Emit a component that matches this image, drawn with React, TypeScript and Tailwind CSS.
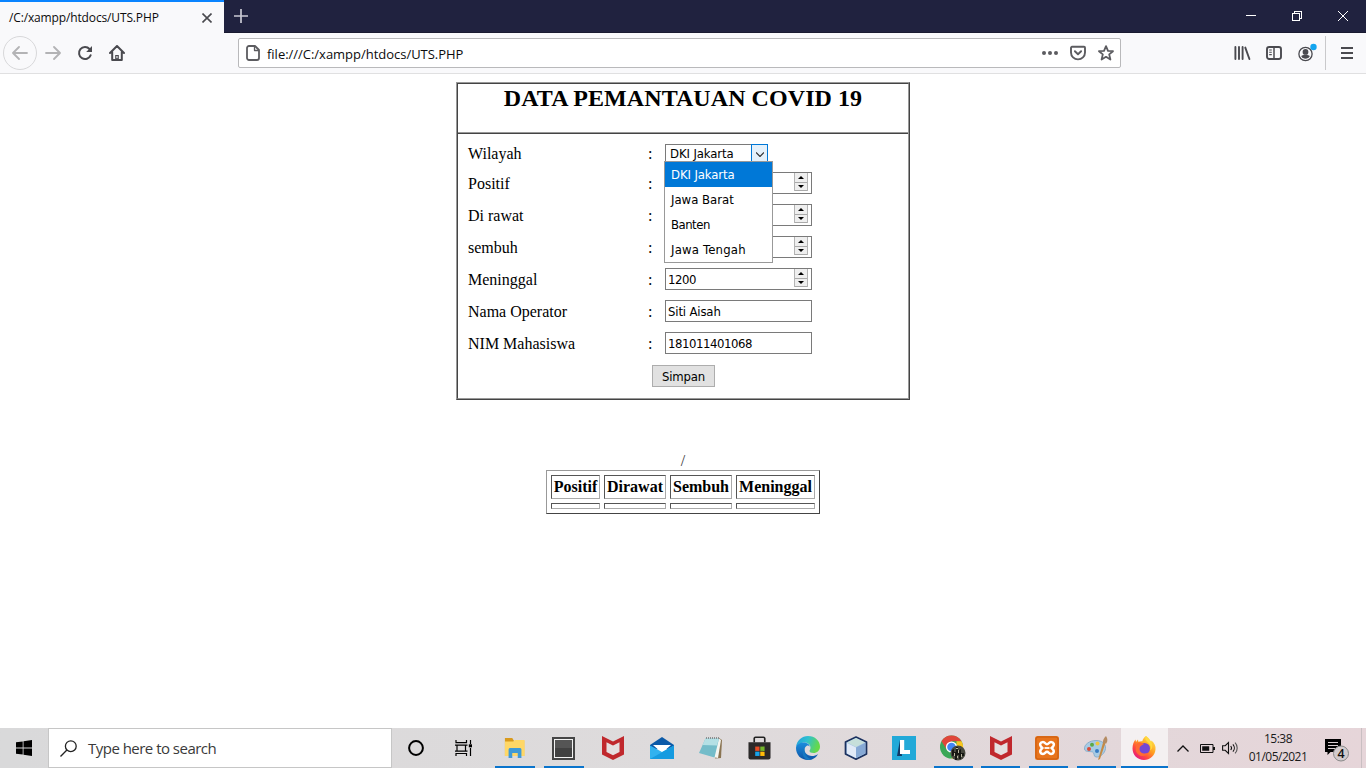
import type { ReactNode } from 'react';

const segoe = "font-['Open_Sans',sans-serif]";
const tahoma = "font-['DejaVu_Sans_Condensed','DejaVu_Sans',sans-serif] [font-stretch:condensed]";

/* ---------- Browser chrome ---------- */

function TitleBar() {
  return (
    <div className="flex h-[33px] bg-[#20223f] border-b border-[#191a30]">
      <div className={`flex h-[33px] w-[224px] items-center justify-between border-t-2 border-[#0a84ff] bg-[#f9f9fb] pl-[9px] pr-3 ${segoe}`}>
        <span className="text-[12px] leading-4 tracking-[-0.14px] text-[#0c0c0d]">/C:/xampp/htdocs/UTS.PHP</span>
        <svg width="10" height="10" viewBox="0 0 10 10" stroke="#4a4a4f" strokeWidth="1.6">
          <path d="M0.5 0.5l9 9M9.5 0.5l-9 9" />
        </svg>
      </div>
      <div className="flex w-[34px] items-center justify-center">
        <svg width="14" height="14" viewBox="0 0 14 14" stroke="#c9c9d3" strokeWidth="1.7">
          <path d="M7 0v14M0 7h14" />
        </svg>
      </div>
      <div className="flex-1" />
      <div className="flex w-[138px] text-white">
        <div className="flex w-[46px] items-center justify-center">
          <svg width="10" height="10" viewBox="0 0 10 10"><path d="M0 4h10v1H0z" fill="#fff" /></svg>
        </div>
        <div className="flex w-[46px] items-center justify-center">
          <svg width="10" height="10" viewBox="0 0 10 10" fill="none" stroke="#fff" shapeRendering="crispEdges">
            <path d="M.5 2.5h7v7h-7zM2.5 2.5v-2h7v7h-2" />
          </svg>
        </div>
        <div className="flex w-[46px] items-center justify-center">
          <svg width="10" height="10" viewBox="0 0 10 10" stroke="#fff"><path d="M0 0l10 10M10 0L0 10" /></svg>
        </div>
      </div>
    </div>
  );
}

function NavBar() {
  return (
    <div className="flex h-[41px] items-center border-b border-[#e0e0e1] bg-[#f9f9fb]">
      <div className="ml-[3px] flex size-[34px] items-center justify-center rounded-full border border-[#d8d8da]">
        <svg width="16" height="14" viewBox="0 0 16 14" fill="none" stroke="#b3b3b5" strokeWidth="1.8" strokeLinecap="round" strokeLinejoin="round">
          <path d="M15 7H1.5M7 1L1 7l6 6" />
        </svg>
      </div>
      <svg className="ml-2" width="16" height="14" viewBox="0 0 16 14" fill="none" stroke="#b3b3b5" strokeWidth="1.8" strokeLinecap="round" strokeLinejoin="round">
        <path d="M1 7h13.5M9 1l6 6-6 6" />
      </svg>
      <svg className="ml-4" width="16" height="16" viewBox="0 0 16 16" fill="none" stroke="#4a4a4f" strokeWidth="2">
        <path d="M13.6 10.3A6 6 0 1 1 12.5 4" strokeLinecap="round" />
        <path d="M15 1v6H9.2z" fill="#4a4a4f" stroke="none" />
      </svg>
      <svg className="ml-4" width="16" height="16" viewBox="0 0 16 16" fill="none" stroke="#4a4a4f" strokeWidth="2" strokeLinejoin="round" strokeLinecap="round">
        <path d="M1 8l7-7 7 7M3.2 7v8h9.6V7" />
        <path d="M6.2 15v-5h3.6v5z" fill="#4a4a4f" stroke="none" />
        <path d="M8 11.5v1.2" stroke="#f9f9fb" strokeWidth="1.2" />
      </svg>
      <div className="ml-[113px] flex h-[30px] w-[883px] items-center rounded-[2px] border border-[#b9b9bb] bg-white pl-[7px] pr-[6px]">
        <svg width="14" height="16" viewBox="0 0 14 16" fill="none" stroke="#5c5c60" strokeWidth="1.8" strokeLinejoin="round">
          <path d="M3 1h6l4 4v8a2 2 0 0 1-2 2H3a2 2 0 0 1-2-2V3a2 2 0 0 1 2-2z" />
          <path d="M8.5 1v4.5H13" strokeWidth="1.3" />
        </svg>
        <span className={`ml-[7px] flex-1 pt-[2px] text-[13px] leading-4 tracking-[-0.02px] text-[#0c0c0d] ${segoe}`}>file:///C:/xampp/htdocs/UTS.PHP</span>
        <svg width="16" height="4" viewBox="0 0 16 4" fill="#5c5c60"><circle cx="2" cy="2" r="2" /><circle cx="8" cy="2" r="2" /><circle cx="14" cy="2" r="2" /></svg>
        <svg className="ml-3" width="16" height="16" viewBox="0 0 16 16" fill="none" stroke="#5c5c60" strokeWidth="1.9" strokeLinecap="round" strokeLinejoin="round">
          <path d="M2 1.8h12a1 1 0 0 1 1 1V7.4a7 7 0 0 1-14 0V2.8a1 1 0 0 1 1-1z" />
          <path d="M4.9 6.2L8 9.2l3.1-3" />
        </svg>
        <svg className="ml-3" width="16" height="16" viewBox="0 0 16 16" fill="none" stroke="#5c5c60" strokeWidth="1.8" strokeLinejoin="round">
          <path d="M8 1.2l2 4.6 5 .4-3.8 3.2 1.2 5.1L8 11.8l-4.4 2.7 1.2-5.1L1 6.2l5-.4z" />
        </svg>
      </div>
      <svg className="ml-[113px]" width="17" height="16" viewBox="0 0 17 16" fill="none" stroke="#4a4a4f" strokeWidth="1.9" strokeLinecap="round">
        <path d="M1.4 2v12M5 2v12M8.6 2v12M11.3 2.6L15.4 14" />
      </svg>
      <svg className="ml-[15px]" width="16" height="16" viewBox="0 0 16 16" fill="none" stroke="#4a4a4f" strokeWidth="1.9">
        <rect x="1" y="2" width="14" height="12" rx="2.2" />
        <path d="M8 2v12" strokeWidth="1.5" />
        <path d="M3.2 5h2.6M3.2 7.3h2.6M3.2 9.6h2.6" strokeWidth="1.1" />
      </svg>
      <svg className="ml-[15px] -mt-px" width="21" height="20" viewBox="0 0 21 20">
        <circle cx="8.5" cy="11" r="6.6" fill="none" stroke="#4a4a4f" strokeWidth="1.3" />
        <circle cx="8.5" cy="8.9" r="2.9" fill="#4a4a4f" />
        <path d="M4.2 13.3c1.2-2 7.4-2 8.6 0a5 5 0 0 1-8.6 0z" fill="#4a4a4f" />
        <circle cx="16.500" cy="4" r="3.2" fill="#13a5ef" />
      </svg>
      <div className="ml-[7px] h-[34px] w-px bg-[#c9c9cb]" />
      <svg className="ml-[15px]" width="12" height="12" viewBox="0 0 12 12" stroke="#4a4a4f" strokeWidth="1.8"><path d="M0 1h12M0 6h12M0 11h12" /></svg>
    </div>
  );
}

/* ---------- Page content ---------- */

function Spinner() {
  return (
    <div className="-mt-[2px] flex h-[18px] w-[14px] flex-col border-x border-[#b4b4b4] bg-[#efefef]">
      <div className="flex h-[9px] items-center justify-center">
        <svg width="6" height="3" viewBox="0 0 6 3"><path d="M3 0L6 3H0z" /></svg>
      </div>
      <div className="flex h-[9px] items-center justify-center border-y border-[#aaa]">
        <svg width="6" height="3" viewBox="0 0 6 3"><path d="M3 3L6 0H0z" /></svg>
      </div>
    </div>
  );
}

function Field({ value, spin }: { value: string; spin?: boolean }) {
  return (
    <div className={`flex h-[22px] w-[147px] items-center justify-between border border-[#7a7a7a] bg-white pl-[2px] pr-[3px] text-[13px] leading-4 ${tahoma}`}>
      <span className={`pt-[2px] ${/^\d/.test(value) ? 'tracking-[-0.45px]' : 'tracking-[-0.15px]'}`}>{value}</span>
      {spin && <Spinner />}
    </div>
  );
}

const regions: [string, string][] = [
  ['DKI Jakarta', 'tracking-[-0.1px]'],
  ['Jawa Barat', 'tracking-[0px]'],
  ['Banten', 'tracking-[-0.5px]'],
  ['Jawa Tengah', 'tracking-[0.2px]'],
];

function RegionSelect() {
  return (
    <div className={`relative mt-[2px] flex h-[20px] w-[103px] border border-[#7a7a7a] bg-white text-[13px] leading-4 ${tahoma}`}>
      <span className="flex-1 pl-1 pt-[1px] tracking-[-0.1px]">DKI Jakarta</span>
      <div className="-m-px flex w-[17px] items-center justify-center border border-[#0078d7] bg-[#e5f1fb]">
        <svg width="8" height="5" viewBox="0 0 8 5" fill="none" stroke="#333" strokeWidth="1.2"><path d="M0 .5l4 4 4-4" /></svg>
      </div>
      <div className="absolute -left-[2px] top-[16px] z-10 w-[109px] border border-[#999] bg-white">
        {regions.map(([name, spacing], i) => (
          <div key={name} className={`flex h-[25px] items-center pl-[6px] ${spacing} ${i === 0 ? 'bg-[#0078d7] text-white' : ''}`}>{name}</div>
        ))}
      </div>
    </div>
  );
}

const rows: [string, ReactNode][] = [
  ['Positif', <Field value="" spin />],
  ['Di rawat', <Field value="" spin />],
  ['sembuh', <Field value="" spin />],
  ['Meninggal', <Field value="1200" spin />],
  ['Nama Operator', <Field value="Siti Aisah" />],
  ['NIM Mahasiswa', <Field value="181011401068" />],
];

function Row({ label, short, children }: { label: string; short?: boolean; children: ReactNode }) {
  return (
    <div className={`flex items-center ${short ? 'h-[28px]' : 'h-8'}`}>
      <span className="w-[180px] pt-px">{label}</span>
      <span className="w-[17px] pt-px">:</span>
      {children}
    </div>
  );
}

function FormTable() {
  return (
    <div className="h-[318px] w-[454px] border border-b-[#444] border-l-[#999] border-r-[#444] border-t-[#999]">
      <div className="h-[316px] border border-b-[#999] border-l-[#444] border-r-[#999] border-t-[#444]">
        <h1 className="h-[48px] pt-[1px] text-center text-[24px] font-bold leading-[27px] tracking-[0.07px]">DATA PEMANTAUAN COVID 19</h1>
        <div className="h-[2px] border-b border-t border-b-[#444] border-t-[#999]" />
        <div className="pl-[10px] pt-[5px]">
          <Row label="Wilayah" short><RegionSelect /></Row>
          {rows.map(([label, field]) => <Row key={label} label={label}>{field}</Row>)}
          <button className={`ml-[184px] mt-[6px] block h-[22px] w-[63px] border border-[#adadad] bg-[#e1e1e1] pt-px text-[13px] leading-[20px] tracking-[-0.2px] ${tahoma}`}>Simpan</button>
        </div>
      </div>
    </div>
  );
}

function ResultTable() {
  const cell = 'border border-b-[#aaa] border-l-[#555] border-r-[#aaa] border-t-[#555]';
  const heads = ['Positif', 'Dirawat', 'Sembuh', 'Meninggal'];
  return (
    <div className="grid h-[44px] w-[274px] grid-cols-[49px_62px_62px_79px] grid-rows-[24px_6px] gap-1 border border-b-[#444] border-l-[#999] border-r-[#444] border-t-[#999] p-1">
      {heads.map((h) => <div key={h} className={`${cell} text-center text-[16px] font-bold leading-[22px]`}>{h}</div>)}
      {heads.map((h) => <div key={h + '-value'} className={cell} />)}
    </div>
  );
}

/* ---------- Taskbar ---------- */

const McAfee = () => (
  <svg width="22" height="24" viewBox="0 0 22 24">
    <path d="M0 0l11 5.5L22 0v18.500L11 24 0 18.500z" fill="#c0282d" />
    <path d="M4.500 6.300L11 9.500l6.500-3.200v9.700L11 19.300 4.500 16z" fill="#e5dfe0" />
  </svg>
);
const Explorer = () => (
  <svg width="22" height="20" viewBox="0 0 24 20" preserveAspectRatio="none">
    <path d="M1 0h8l2 3h11v15H1z" fill="#d99a1c" />
    <path d="M1 3.500h9l2-1.500h10.500v16H1z" fill="#ffd766" />
    <path d="M5 20v-8.500A1.500 1.500 0 0 1 6.500 10h11a1.500 1.500 0 0 1 1.500 1.500V20h-4v-5H9v5z" fill="#3f9ad6" />
  </svg>
);
const Terminal = () => (
  <svg width="23" height="23" viewBox="0 0 23 23">
    <rect width="23" height="23" fill="#454545" /><path d="M3 3h17v17H3z" fill="#414141" /><path d="M3 3h17v8H3z" fill="#555" /><rect x="2.500" y="2.500" width="18" height="18" fill="none" stroke="#f2f2f2" />
  </svg>
);
const Mail = () => (
  <svg width="24" height="22" viewBox="0 0 24 22">
    <path d="M0 8L12 0l12 8v4H0z" fill="#0b5aa8" /><path d="M3 8h18l-9 8z" fill="#fff" />
    <path d="M0 8.500L12 15l12-6.500V22H0z" fill="#31b2ef" /><path d="M0 22l24-13.500V22z" fill="#169be0" />
  </svg>
);
const Notepad = () => (
  <svg width="24" height="22" viewBox="0 0 24 22">
    <path d="M20 1l3 2-1 18-6 .500z" fill="#8a7452" /><path d="M19 1l3 2-3 18-5-1z" fill="#f5f5f0" />
    <path d="M6.500 1.500H20l-4.500 19L0 16z" fill="#74bcc9" /><path d="M6.500 1.500H20l-2 7L3.500 8z" fill="#b4e0e5" />
    <path d="M7 1h13" stroke="#777" strokeDasharray="1 1" strokeWidth="1.500" />
  </svg>
);
const Store = () => (
  <svg className="-ml-px" width="23" height="24" viewBox="0 0 24 24">
    <path d="M6.500 6V2A1.300 1.300 0 0 1 7.800.8h8.400A1.300 1.300 0 0 1 17.500 2v4" fill="none" stroke="#222" strokeWidth="1.700" />
    <path d="M.5 6h23v16a2 2 0 0 1-2 2h-19a2 2 0 0 1-2-2z" fill="#2b2929" />
    <path d="M7.500 10.500H12V15H7.500z" fill="#e74b24" /><path d="M12.800 10.500h4.500V15h-4.500z" fill="#74b62b" />
    <path d="M7.500 15.800H12v4.500H7.500z" fill="#18a3ea" /><path d="M12.800 15.800h4.500v4.500h-4.500z" fill="#ffba08" />
  </svg>
);
const Edge = () => (
  <svg className="-ml-[2px]" width="24" height="24" viewBox="0 0 24 24">
    <defs>
      <linearGradient id="edgeTop" x1="0" y1="0" x2="1" y2=".3"><stop offset="0" stopColor="#1f9de0" /><stop offset=".5" stopColor="#2fc1cf" /><stop offset="1" stopColor="#65d94a" /></linearGradient>
      <linearGradient id="edgeSide" x1="0" y1="0" x2="0" y2="1"><stop offset="0" stopColor="#1b8ede" /><stop offset="1" stopColor="#0e55a5" /></linearGradient>
    </defs>
    <path d="M0 11C1 4 6 0 12 0c7 0 12 5 12 10.500 0 4-3 6.500-6.500 6.500-2.500 0-4-1-4-2s1-1.300 1-3.200C14.500 8 11 6.500 8.500 6.500 4.500 6.500 1 9 0 11z" fill="url(#edgeTop)" />
    <path d="M0 12c0-3.500 4-5.500 8-5.500 3.500 0 6 2.500 6 5 0-1.500-2-2.500-3.500-1.500C8 11.500 8 15 10 17.500c2.500 3 8 3.500 12 .5-2 4-6 6-10 6C5 24 0 19 0 12z" fill="url(#edgeSide)" />
    <path d="M8.500 12c-1 5 2 10 7.500 11.300A12 12 0 0 1 12 24c-5-1-7-8-3.500-12z" fill="#1578c2" />
  </svg>
);
const NetBeans = () => (
  <svg width="24" height="24" viewBox="0 0 24 24" strokeLinejoin="round">
    <path d="M12 1l10.500 5v12L12 23.200 1.500 18V6z" fill="#a7c3e6" stroke="#1b315f" strokeWidth="1.700" />
    <path d="M12 2l9 4.500L12 11 3 6.500z" fill="#c6dfda" /><path d="M3 7l9 4.500V22l-9-4.500z" fill="#e1eaf7" /><path d="M21 7l-9 4.500V22l9-4.500z" fill="#86a9d5" />
  </svg>
);
const LApp = () => (
  <svg width="24" height="24" viewBox="0 0 24 24">
    <rect width="24" height="24" fill="#22a9d8" /><path d="M8 4L5 20h5z" fill="#123a66" /><path d="M8 4h4.200v10H18v4H8z" fill="#fff" />
  </svg>
);
const Chrome = () => (
  <svg width="26" height="26" viewBox="0 0 26 26">
    <circle cx="11.500" cy="12" r="11.500" fill="#3ba757" />
    <path d="M1.500 6.200A11.500 11.500 0 0 1 21.500 6.200H11.500L7 15z" fill="#e0463a" />
    <path d="M21.500 6.200a11.500 11.500 0 0 1-10 17.300L16.500 15V6.200z" fill="#fbc51e" />
    <circle cx="11.500" cy="12" r="5.600" fill="#fff" /><circle cx="11.500" cy="12" r="4.300" fill="#4285f4" />
    <circle cx="18" cy="18" r="7.500" fill="#47483f" />
    <path d="M12 15l2-1v3h2v-5h2v4l3-2v4h3v3h-3v3h-2v-4h-2v5h-2v-5l-3 1z" fill="#171814" /><path d="M14 18h1v3h-1zM18 15h1v3h-1zM21 19h1v3h-1zM16 13h2v1h-2zM17 21h1v2h-1z" fill="#b8b59f" />
  </svg>
);
const Xampp = () => (
  <svg className="-ml-[2px]" width="24" height="24" viewBox="0 0 24 24">
    <rect width="24" height="24" rx="2.500" fill="#e8741c" /><rect x="1" y="1" width="22" height="22" rx="2" fill="none" stroke="#c95d10" />
    <path d="M8 6C5 6 4.500 9 5.800 10.300L7.300 12l-1.500 1.700C4.500 15.500 5.500 18 8 18c2.200 0 2.300-2.300 4-2.300s1.800 2.300 4 2.300c2.500 0 3.500-2.500 2.200-4.300L16.700 12l1.500-1.700C19.500 9 19 6 16 6c-2.200 0-2.300 2.300-4 2.300S10.200 6 8 6z" fill="none" stroke="#fff" strokeWidth="2.600" />
    <path d="M9.500 12h5" stroke="#fff" strokeWidth="1.800" />
  </svg>
);
const Paint = () => (
  <svg className="-ml-[2px]" width="24" height="24" viewBox="0 0 24 24">
    <path d="M12 4.500c6 0 10 3 9.500 8S16 21.500 12 21c-3-.5-1-4-3.500-5S1 16.500.5 13C0 8.500 5.500 4.500 12 4.500z" fill="#a8cbe4" stroke="#7ea6c5" strokeWidth=".8" />
    <circle cx="5" cy="13" r="2" fill="#d94b38" /><circle cx="8" cy="8.800" r="2" fill="#5ba947" /><circle cx="13.500" cy="7.500" r="2" fill="#f0c541" /><circle cx="13" cy="15" r="2" fill="#377cc3" />
    <path d="M19.500 5l2.500.5-6 17.500-2 1z" fill="#c58a45" /><path d="M19 7c-.5-3 1-5 3-7 1.500 2 2 5 .3 7.500z" fill="#b48b62" />
  </svg>
);
const Firefox = () => (
  <svg className="-ml-[2px]" width="24" height="24" viewBox="0 0 24 24">
    <defs>
      <linearGradient id="fox" x1=".85" y1=".1" x2=".2" y2=".9"><stop offset="0" stopColor="#ffe14a" /><stop offset=".45" stopColor="#ff9a1f" /><stop offset=".75" stopColor="#ff4940" /><stop offset="1" stopColor="#e91f76" /></linearGradient>
    </defs>
    <path d="M14 0c3 2 4.300 4.300 5 6l.5-1.500C22.500 7 24 10 23.500 13.500 23 19.500 18 24 12 24 5.500 24 .5 19 .5 12.500c0-4 1.300-7 3-9L4 6l2-2.500.3 2.300c1.200-.6 2.700-.8 4-.6C11 3 12 1 14 0z" fill="url(#fox)" />
    <circle cx="12.500" cy="12.500" r="5.500" fill="#7447d5" />
    <path d="M5.500 7c3-1 4 0 6.500 1l-2.500 1.500c-1 .8-2 1.500-2 3.500 0 4 5 6 9 3.500-2 4-7 4.500-10 2-4-3-3-8-1-11.500z" fill="#ff6a33" />
    <path d="M14 0c-2 3 .5 5 3 7.500 2 2 2 5 1 7 3-1.500 3-6 1-9C18 3.500 15.500 2.500 14 0z" fill="#ffda3e" />
  </svg>
);
const Cortana = () => (
  <svg width="18" height="18" viewBox="0 0 18 18"><circle cx="9" cy="9" r="6.900" fill="none" stroke="#000" strokeWidth="2" /></svg>
);
const TaskView = () => (
  <svg className="-ml-[2px]" width="18" height="16" viewBox="0 0 18 16" fill="none" stroke="#000" strokeWidth="1.200">
    <path d="M1 0v2.700h10.500V0M2 5.200v6h8.500v-6M0 5.200h12.500M0 11.200h12.500M1 16v-2.500h10.500V16M15.500 0v4M15.500 8v8" /><path d="M13.800 4.300h3.200v3h-3.200z" fill="#000" stroke="none" />
  </svg>
);

function Task({ width, bar, active, children }: { width: string; bar?: string; active?: boolean; children: ReactNode }) {
  return (
    <div className={`flex h-10 flex-col items-center ${width} ${active ? 'bg-[#f4f0f1]' : ''}`}>
      <div className="flex h-[38px] items-center pt-[2px]">{children}</div>
      {bar && <div className={`h-[2px] bg-[#0a74cc] ${bar}`} />}
    </div>
  );
}

function Taskbar() {
  return (
    <div className={`flex h-10 bg-linear-to-r from-[#d9d9da] via-[#dedbdc] to-[#e6d5d9] ${segoe}`}>
      <div className="flex w-12 items-center justify-center">
        <svg width="16" height="16" viewBox="0 0 16 16"><path d="M0 2.300L6.700 1.400v6.200H0zM7.500 1.300L16 0v7.600H7.500zM0 8.400h6.700v6.200L0 13.700zM7.500 8.400H16V16l-8.500-1.300z" /></svg>
      </div>
      <div className="flex h-10 w-[344px] items-center border border-[#c6c6c6] bg-white pl-[11px]">
        <svg width="17" height="17" viewBox="0 0 17 17" fill="none" stroke="#222" strokeWidth="1.300"><circle cx="10.800" cy="6.200" r="5.400" /><path d="M6.900 10L.5 16.500" /></svg>
        <span className="ml-[11px] text-[15px] leading-5 tracking-[-0.52px] text-[#3a3a3a]">Type here to search</span>
      </div>
      <Task width="w-12"><Cortana /></Task>
      <Task width="w-[50px]"><TaskView /></Task>
      <Task width="w-[49px]" bar="w-10"><Explorer /></Task>
      <Task width="w-[49px]" bar="w-10"><Terminal /></Task>
      <Task width="w-[49px]"><McAfee /></Task>
      <Task width="w-[49px]"><Mail /></Task>
      <Task width="w-[49px]"><Notepad /></Task>
      <Task width="w-[49px]"><Store /></Task>
      <Task width="w-[49px]"><Edge /></Task>
      <Task width="w-[46px]"><NetBeans /></Task>
      <Task width="w-[50px]"><LApp /></Task>
      <Task width="w-12" bar="w-[39px]"><Chrome /></Task>
      <Task width="w-[47px]" bar="w-[39px]"><McAfee /></Task>
      <Task width="w-12" bar="w-[39px]"><Xampp /></Task>
      <Task width="w-[49px]" bar="w-[39px]"><Paint /></Task>
      <Task width="w-[47px]" bar="w-[47px]" active><Firefox /></Task>
      <div className="flex flex-1 items-center pl-[9px]">
        <svg width="12" height="7" viewBox="0 0 12 7" fill="none" stroke="#111" strokeWidth="1.300"><path d="M.5 6.500L6 1l5.500 5.500" /></svg>
        <svg className="ml-[11px]" width="15" height="9" viewBox="0 0 15 9"><path d="M.5.5h12.500v8H.5z" fill="none" stroke="#111" /><path d="M2.200 2.200h7v4.600h-7zM13 3h2v3h-2z" fill="#111" /></svg>
        <svg className="ml-[7px]" width="17" height="14" viewBox="0 0 17 14" fill="none" stroke="#111" strokeWidth="1.100">
          <path d="M.6 4.700h2.600L6.500 1.500v11L3.200 9.300H.6z" /><path d="M8.700 5a3 3 0 0 1 0 4M10.900 3.300a5.500 5.500 0 0 1 0 7.400" /><path d="M13.100 1.600a8 8 0 0 1 0 10.800" stroke="#555" />
        </svg>
        <div className="ml-[8px] flex w-[62px] flex-col items-center whitespace-nowrap text-[12px] leading-[18px] tracking-[-0.52px] text-[#1a1a1a]">
          <span>15:38</span><span>01/05/2021</span>
        </div>
        <svg className="ml-[16px] mt-[3px]" width="26" height="24" viewBox="0 0 26 24">
          <path d="M0 1h16v13H5.500L2.500 17v-3H0z" fill="#000" /><path d="M3 4.500h10M3 7.500h10M3 10.500h7" stroke="#d8cdd0" />
          <circle cx="16" cy="15.500" r="7.500" fill="#d2cbcd" stroke="#888" />
          <text x="16" y="20" textAnchor="middle" fontSize="12.500" fontWeight="600" fill="#111">4</text>
        </svg>
        <div className="ml-auto mr-1 h-10 w-px bg-[#c9bfc2]" />
      </div>
    </div>
  );
}

export default function App() {
  return (
    <div className="flex h-[768px] w-[1366px] flex-col overflow-hidden bg-white text-black">
      <TitleBar />
      <NavBar />
      <main className="flex flex-1 flex-col items-center pt-[8px] font-['Liberation_Serif',serif] text-[16px]">
        <FormTable />
        <div className="mt-[51px] h-[19px] leading-[19px] text-[#333]">/</div>
        <ResultTable />
      </main>
      <Taskbar />
    </div>
  );
}
